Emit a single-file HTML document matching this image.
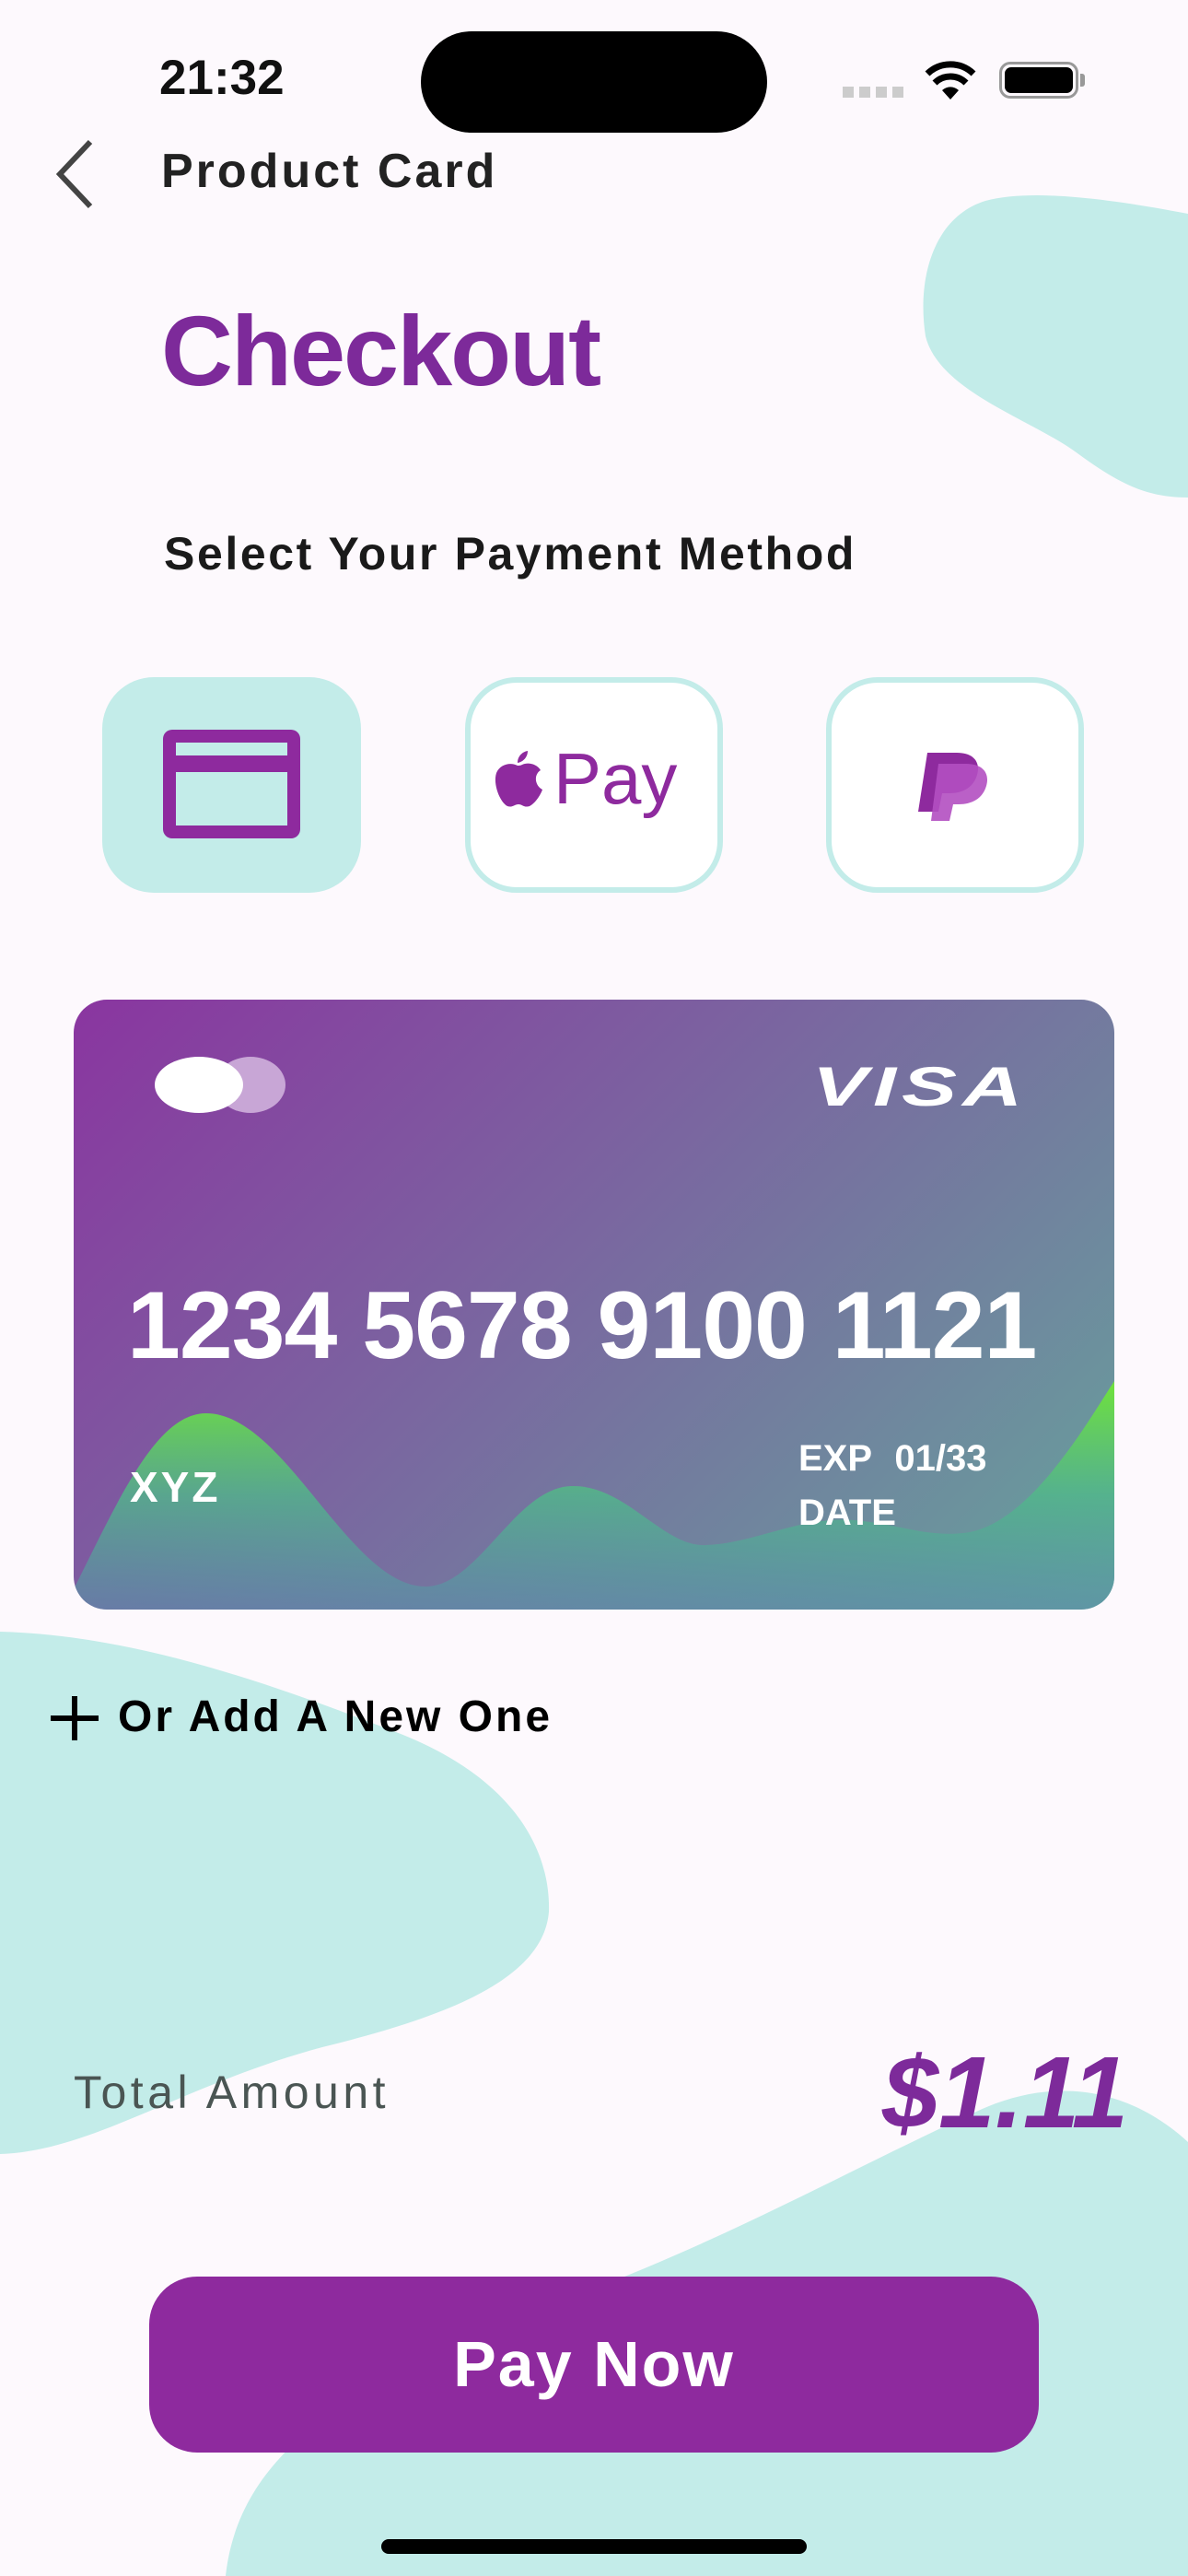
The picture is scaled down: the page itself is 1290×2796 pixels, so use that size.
<!DOCTYPE html>
<html><head><meta charset="utf-8"><style>
*{margin:0;padding:0;box-sizing:border-box}
body{width:1290px;height:2796px;background:#fdf9fd;position:relative;overflow:hidden;font-family:"Liberation Sans",sans-serif}
.abs{position:absolute}
.txt{white-space:nowrap}
</style></head><body>
<svg class="abs" style="left:0;top:0" width="1290" height="2796" viewBox="0 0 1290 2796">
<path fill="#c3ece9" d="M1290,232 C1200,215 1120,205 1070,218 C1015,235 995,300 1005,365 C1020,425 1120,455 1170,492 C1215,525 1245,540 1290,540 Z"/>
<path fill="#c3ece9" d="M0,1771 C150,1775 300,1830 430,1880 C560,1930 598,2010 596,2075 C590,2150 480,2190 350,2222 C200,2262 100,2335 0,2338 Z"/>
<path fill="#c3ece9" d="M1290,2325 C1230,2270 1150,2250 1060,2292 C900,2365 720,2470 520,2525 C380,2600 260,2660 245,2796 L1290,2796 Z"/>
</svg>
<div class="abs txt" style="left:173px;top:54px;font-size:53px;font-weight:bold;color:#111">21:32</div>
<div class="abs" style="left:457px;top:34px;width:376px;height:110px;border-radius:55px;background:#000"></div>
<div class="abs" style="left:915px;top:94px;width:66px;height:12px;background:repeating-linear-gradient(90deg,#ccc 0 12px,transparent 12px 18px)"></div>
<svg class="abs" style="left:1003px;top:64px" width="58" height="44" viewBox="0 0 58 44"><path d="M29 44 L20 34 A13 13 0 0 1 38 34Z" fill="#000"/><path d="M12 26 A24 24 0 0 1 46 26" stroke="#000" stroke-width="7" fill="none"/><path d="M4 16 A36 36 0 0 1 54 16" stroke="#000" stroke-width="7" fill="none"/></svg>
<div class="abs" style="left:1085px;top:67px;width:86px;height:40px;border:3px solid #999;border-radius:12px"></div>
<div class="abs" style="left:1091px;top:73px;width:74px;height:28px;background:#000;border-radius:7px"></div>
<div class="abs" style="left:1173px;top:80px;width:5px;height:14px;background:#999;border-radius:0 3px 3px 0"></div>
<svg class="abs" style="left:55px;top:150px" width="50" height="78"><path d="M43 4 L10 39 L43 74" stroke="#444" stroke-width="6" fill="none"/></svg>
<div class="abs txt" style="left:175px;top:156px;font-size:52px;font-weight:bold;color:#222;letter-spacing:3px">Product Card</div>
<div class="abs txt" style="left:175px;top:318px;font-size:108px;font-weight:bold;color:#7d2a9a;letter-spacing:-2px">Checkout</div>
<div class="abs txt" style="left:178px;top:572px;font-size:50px;font-weight:bold;color:#1a1a1a;letter-spacing:2.6px">Select Your Payment Method</div>
<div class="abs" style="left:111px;top:735px;width:281px;height:234px;border-radius:56px;background:#c3ece9"></div>
<div class="abs" style="left:177px;top:792px;width:149px;height:118px;border:14px solid #8e2a9e;border-radius:10px"></div>
<div class="abs" style="left:184px;top:820px;width:135px;height:18px;background:#8e2a9e"></div>
<div class="abs" style="left:505px;top:735px;width:280px;height:234px;border-radius:56px;border:6px solid #c3ece9;background:#fff"></div>
<svg class="abs" style="left:531px;top:815px" width="62" height="62" viewBox="0 0 62 62"><path fill="#8e2a9e" d="M31 16 C24 12 12 14 8 24 C4 36 12 56 20 60 C25 62 28 58 32 58 C36 58 38 62 44 60 C50 57 56 48 58 42 C50 38 48 26 56 21 C52 14 42 12 36 15 C34 16 32 16 31 16Z M31 13 C31 6 36 1 42 0 C42 7 37 12 31 13Z"/></svg>
<div class="abs txt" style="left:601px;top:800px;font-size:78px;color:#8e2a9e">Pay</div>
<div class="abs" style="left:897px;top:735px;width:280px;height:234px;border-radius:56px;border:6px solid #c3ece9;background:#fff"></div>
<svg class="abs" style="left:993px;top:815px" width="86" height="76" viewBox="0 0 86 76"><path fill="#8e2a9e" d="M14 2 L46 2 C64 2 72 12 68 26 C64 40 52 46 38 46 L30 46 L26 66 L4 66 Z"/><path fill="#b24fc1" d="M26 14 L56 14 C74 14 82 24 78 38 C74 52 62 58 48 58 L42 58 L38 76 L18 76 Z" opacity=".9"/></svg>
<div class="abs" style="left:80px;top:1085px;width:1130px;height:662px;border-radius:36px;overflow:hidden;background:linear-gradient(135deg,#8a35a0 0%,#7a66a0 45%,#66a39c 100%)">
<svg class="abs" style="left:0;top:0" width="1130" height="662" viewBox="0 0 1130 662"><defs><linearGradient id="g" x1="0" y1="0" x2="0" y2="1"><stop offset="0" stop-color="#6fe33a"/><stop offset=".5" stop-color="#50b88a" stop-opacity=".8"/><stop offset="1" stop-color="#5a8faa" stop-opacity=".6"/></linearGradient></defs>
<path fill="url(#g)" d="M0,640 C50,540 90,450 143,449 C230,448 300,640 384,637 C440,635 480,530 540,528 C600,526 640,595 687,592 C740,590 790,560 848,565 C900,570 930,585 973,578 C1040,565 1100,460 1130,414 L1130,662 L0,662Z"/></svg>
<div class="abs" style="left:154px;top:62px;width:76px;height:61px;border-radius:50%;background:#c8a6d6"></div>
<div class="abs" style="left:88px;top:62px;width:96px;height:61px;border-radius:50%;background:#fff"></div>
<div class="abs txt" style="left:802px;top:60px;font-size:60px;font-weight:bold;font-style:italic;color:#fff;letter-spacing:4px;transform:scaleX(1.5);transform-origin:left top">VISA</div>
<div class="abs txt" style="left:58px;top:295px;font-size:104px;font-weight:bold;color:#fff;letter-spacing:-1px">1234 5678 9100 1121</div>
<div class="abs txt" style="left:61px;top:502px;font-size:46px;font-weight:bold;color:#fff;letter-spacing:3px">XYZ</div>
<div class="abs txt" style="left:787px;top:476px;font-size:40px;font-weight:bold;color:#fff;word-spacing:14px">EXP 01/33</div>
<div class="abs txt" style="left:787px;top:535px;font-size:40px;font-weight:bold;color:#fff">DATE</div>
</div>
<svg class="abs" style="left:55px;top:1841px" width="52" height="48"><path d="M26 0V48M0 24H52" stroke="#000" stroke-width="6"/></svg>
<div class="abs txt" style="left:128px;top:1836px;font-size:48px;font-weight:bold;color:#000;letter-spacing:3px">Or Add A New One</div>
<div class="abs txt" style="left:80px;top:2242px;font-size:50px;color:#4a5553;letter-spacing:4.5px">Total Amount</div>
<div class="abs txt" style="left:958px;top:2208px;font-size:110px;font-weight:bold;font-style:italic;color:#7d2a9a;letter-spacing:0px">$1.11</div>
<div class="abs" style="left:162px;top:2471px;width:966px;height:191px;border-radius:52px;background:#8e2a9e;color:#fff;font-size:70px;font-weight:bold;text-align:center;line-height:191px;letter-spacing:2px">Pay Now</div>
<div class="abs" style="left:414px;top:2756px;width:462px;height:16px;border-radius:8px;background:#000"></div>
</body></html>
